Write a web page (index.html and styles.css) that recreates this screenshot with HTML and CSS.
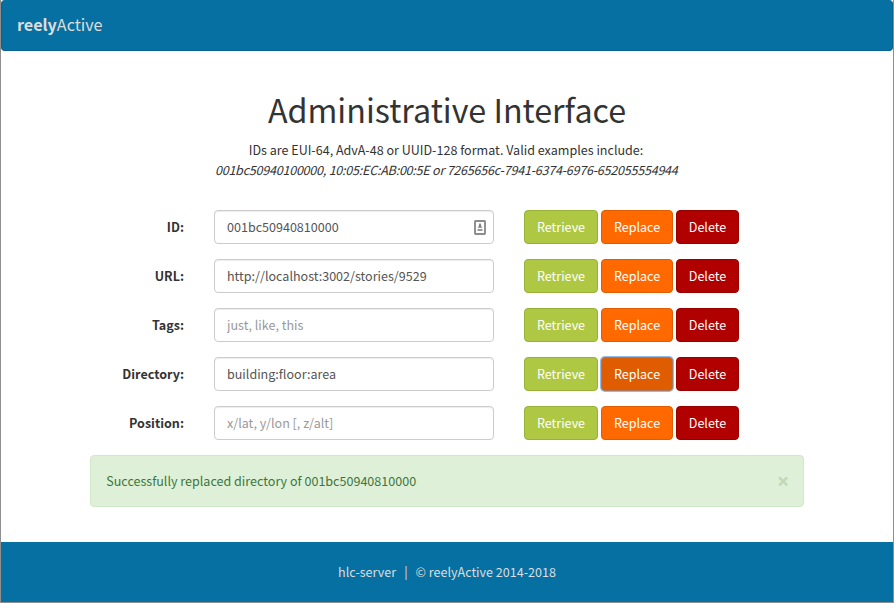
FILE: index.html
```html
<!DOCTYPE html>
<html lang="en">
<head>
<meta charset="utf-8">
<title>reelyActive Administrative Interface</title>
<link rel="stylesheet" href="styles.css">
</head>
<body>
<nav class="navbar"><a class="brand"><b>reely</b><span>Active</span></a></nav>
<main class="container">
  <h1><span>Administrative Interface</span></h1>
  <p class="intro"><span class="lead">IDs are EUI-64, AdvA-48 or UUID-128 format. Valid examples include:</span><br><em>001bc50940100000, 10:05:EC:AB:00:5E or 7265656c-7941-6374-6976-652055554944</em></p>
  <form class="form">
    <div class="row">
      <label>ID:</label>
      <div class="field"><input type="text" value="001bc50940810000">
        <svg class="key" viewBox="0 0 12 15" width="12" height="15"><rect x="1" y="1" width="10" height="13" rx=".5" fill="#fff" stroke="#8c8c8c" stroke-width="1.9"/><path d="M6 2.800L7.200 5v1.200l1.300 1.500H3.500L4.800 6.200V5z" fill="#808080"/><path d="M3.500 10h5" stroke="#999" stroke-width="2"/></svg>
      </div>
      <div class="actions"><button type="button" class="retrieve">Retrieve</button><button type="button" class="replace">Replace</button><button type="button" class="delete">Delete</button></div>
    </div>
    <div class="row">
      <label>URL:</label>
      <div class="field"><input type="text" value="http://localhost:3002/stories/9529"></div>
      <div class="actions"><button type="button" class="retrieve">Retrieve</button><button type="button" class="replace">Replace</button><button type="button" class="delete">Delete</button></div>
    </div>
    <div class="row">
      <label>Tags:</label>
      <div class="field"><input type="text" placeholder="just, like, this"></div>
      <div class="actions"><button type="button" class="retrieve">Retrieve</button><button type="button" class="replace">Replace</button><button type="button" class="delete">Delete</button></div>
    </div>
    <div class="row">
      <label>Directory:</label>
      <div class="field"><input type="text" value="building:floor:area"></div>
      <div class="actions"><button type="button" class="retrieve">Retrieve</button><button type="button" class="replace focused">Replace</button><button type="button" class="delete">Delete</button></div>
    </div>
    <div class="row">
      <label>Position:</label>
      <div class="field"><input type="text" placeholder="x/lat, y/lon [, z/alt]"></div>
      <div class="actions"><button type="button" class="retrieve">Retrieve</button><button type="button" class="replace">Replace</button><button type="button" class="delete">Delete</button></div>
    </div>
  </form>
  <div class="alert"><span>Successfully replaced directory of 001bc50940810000</span><button type="button" class="close">×</button></div>
</main>
<footer class="footer"><span>hlc-server</span><span class="sep">|</span><span>© reelyActive 2014-2018</span></footer>
</body>
</html>
```
FILE: styles.css
```css
* { box-sizing: border-box; }
html { height: 100%; }
body {
  margin: 0;
  height: 603px;
  display: flex;
  flex-direction: column;
  border: solid #8f8f8f;
  border-width: 0 1px 1px;
  background: #fff;
  color: #333;
  font-family: "Noto Sans CJK SC", "Noto Sans", sans-serif;
  font-size: 12.55px;
  line-height: 20px;
  overflow: hidden;
}
.navbar {
  height: 51px;
  flex: none;
  background: #0770a2;
  border: 1px solid #06628e;
  border-top-color: #0770a2;
  border-radius: 4px;
  padding: 13px 15px;
}
.brand { display: block; color: #ddd; font-size: 16.1px; line-height: 20px; }
.container { flex: 1; padding: 38px 89px 0; }
h1 {
  margin: 0;
  height: 40px;
  font-size: 32.25px;
  line-height: 40px;
  font-weight: 400;
  text-align: center;
}
.intro { margin: 11px 0 30px; text-align: center; white-space: nowrap; }
.lead { margin-right: 2px; }
.intro em { letter-spacing: -.235px; margin-right: 1.5px; }
.row {
  display: grid;
  grid-template-columns: 94px 280px auto;
  column-gap: 30px;
  height: 34px;
  margin-bottom: 15px;
}
label { font-weight: 700; text-align: right; line-height: 34px; }
.field { position: relative; }
input {
  display: block;
  width: 100%;
  height: 34px;
  padding: 5px 12px 7px;
  border: 1px solid #ccc;
  border-radius: 4px;
  box-shadow: inset 0 1px 1px rgba(0, 0, 0, .075);
  background: #fff;
  color: #555;
  font: inherit;
  outline: 0;
}
input::placeholder { color: #999; opacity: 1; }
.key { position: absolute; right: 8px; top: 10px; }
.actions { display: flex; gap: 3px; }
.actions button {
  height: 34px;
  padding: 0;
  border: 1px solid;
  border-radius: 4px;
  color: #fff;
  font: inherit;
}
.actions .retrieve { width: 74px; background: #aec844; border-color: #98b138; }
.actions .replace { width: 72px; background: #ff6900; border-color: #df5c00; }
.actions .delete { width: 63px; background: #b00000; border-color: #980000; }
.actions .focused {
  background: #df5c00;
  border-color: #a87863;
  box-shadow: 0 0 0 1px #8fbcec;
}
.alert {
  display: flex;
  justify-content: space-between;
  height: 52px;
  padding: 15px 15px 15px 15.2px;
  border: 1px solid #d0e9c6;
  border-radius: 4px;
  background: #dff0d8;
  color: #3c763d;
}
.close {
  width: 11px;
  height: 20px;
  margin: 0;
  padding: 0;
  border: 0;
  background: none;
  color: #c0d9b9;
  font: 700 21.5px/20px "Open Sans", sans-serif;
}
.footer {
  flex: none;
  height: 60px;
  display: flex;
  justify-content: center;
  align-items: center;
  background: #0770a2;
  color: #ddd;
}
.sep { margin: 0 8px; }
```
